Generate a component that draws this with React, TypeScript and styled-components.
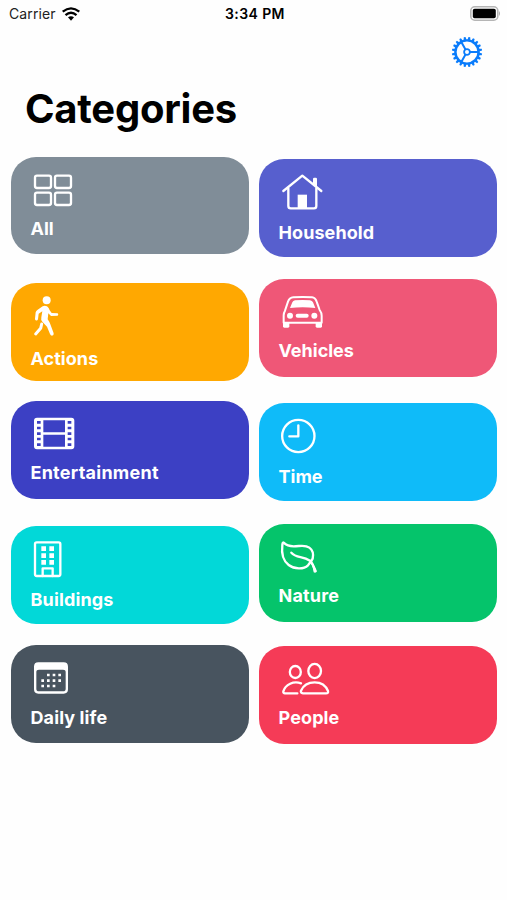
import React from "react";
import styled, { createGlobalStyle } from "styled-components";

const GlobalStyle = createGlobalStyle`
  body {
    margin: 0;
    background: #fefefe;
    font-family: Inter, "Liberation Sans", sans-serif;
  }
`;

const Screen = styled.div`
  box-sizing: border-box;
  width: 507px;
  height: 900px;
  overflow: hidden;
  color: #000;
`;

const StatusBar = styled.header`
  display: grid;
  grid-template-columns: 1fr auto 1fr;
  align-items: center;
  height: 27px;
  padding: 0 6px 0 9px;
`;

const Carrier = styled.div`
  display: flex;
  align-items: center;
  gap: 6px;
  font-size: 14px;
  letter-spacing: 0.12px;
  color: #222;
`;

const Clock = styled.div`
  font-size: 14px;
  font-weight: 600;
  letter-spacing: 0.4px;
`;

const BatterySlot = styled.div`
  display: flex;
  justify-content: flex-end;
`;

const NavBar = styled.nav`
  display: flex;
  justify-content: flex-end;
  height: 51px;
  padding: 8px 23px 0 0;
  box-sizing: border-box;
`;

const IconButton = styled.button`
  display: block;
  width: 34px;
  height: 34px;
  padding: 0;
  border: 0;
  background: none;
  color: #0a7cfb;
`;

const Title = styled.h1`
  margin: 0;
  height: 79px;
  padding: 7px 0 0 25px;
  box-sizing: border-box;
  font-size: 40px;
  line-height: 48px;
  font-weight: 700;
  letter-spacing: -0.25px;
`;

const Columns = styled.main`
  display: flex;
  gap: 10px;
  padding-left: 11px;
`;

const Column = styled.div`
  display: flex;
  flex-direction: column;
  width: 238px;
`;

const Card = styled.section<{ $color: string; $gap: number; $height: number }>`
  box-sizing: border-box;
  flex: none;
  height: ${(p) => p.$height}px;
  margin-top: ${(p) => p.$gap}px;
  padding: 12px 0 0 20px;
  border-radius: 25px;
  background: ${(p) => p.$color};
  color: #fff;
`;

const CardIcon = styled.svg`
  display: block;
  width: 60px;
  height: 46px;
  overflow: visible;
  fill: none;
  stroke: currentColor;
  stroke-width: 7;
  stroke-linecap: round;
  stroke-linejoin: round;
`;

const Label = styled.h2<{ $drop: number; $spacing: number }>`
  margin: ${(p) => p.$drop}px 0 0 -0.5px;
  font-size: 18px;
  line-height: 22px;
  font-weight: 700;
  letter-spacing: ${(p) => p.$spacing}px;
  white-space: nowrap;
`;

const AllIcon = () => (
  <CardIcon viewBox="93 72 180 138">
    <rect x="105" y="92" width="48" height="37" rx="6" />
    <rect x="165" y="92" width="48" height="37" rx="6" />
    <rect x="105" y="143" width="48" height="37" rx="6" />
    <rect x="165" y="143" width="48" height="37" rx="6" />
  </CardIcon>
);

const HouseIcon = () => (
  <CardIcon viewBox="75 79 180 138">
    <path d="M88 139 L145 93 L202 139" />
    <path d="M103 131 V184 Q103 191 110 191 H180 Q187 191 187 184 V131" />
    <path d="M177 103 Q177 99 181 99 H185 Q189 99 189 103 V129 L177 119 Z" fill="currentColor" stroke="none" />
    <path d="M131 150 H159 V190 H131 Z" fill="currentColor" stroke="none" />
  </CardIcon>
);

const WalkIcon = () => (
  <CardIcon viewBox="93 75 180 138">
    <circle cx="140" cy="91" r="12" fill="currentColor" stroke="none" />
    <path
      d="M128 109 Q134 106 141 109 Q147 113 149 121 L155 129 L173 130 Q177 133 173 137 L153 138 L145 130 L143 148 Q148 155 151 163 L161 190 Q162 197 156 197 Q152 197 150 192 L141 170 L127 155 Q122 150 124 142 L127 124 L116 131 L114 148 Q112 153 107 151 Q105 149 105 146 L107 127 Q108 123 113 119 Z"
      fill="currentColor"
      stroke="none"
    />
    <path d="M125 162 L122 175 L107 192" strokeWidth="9" />
  </CardIcon>
);

const CarIcon = () => (
  <CardIcon viewBox="75 64 180 138">
    <path
      d="M89 159 V137 Q89 130 93 123 L102 96 Q106 84 118 83 Q146 81 174 83 Q184 84 188 96 L197 121 Q203 129 203 138 V159 Z"
      strokeWidth="6"
    />
    <path
      d="M108 115 L115 98 Q117 93 123 92 Q146 90 168 92 Q175 93 177 98 L184 115 Q146 111 108 115 Z"
      fill="currentColor"
      stroke="none"
    />
    <circle cx="108" cy="138" r="9" fill="currentColor" stroke="none" />
    <circle cx="181" cy="138" r="9" fill="currentColor" stroke="none" />
    <rect x="125" y="132" width="39" height="12" rx="6" fill="currentColor" stroke="none" />
    <path d="M87 158 H106 V170 Q106 174 102 174 H91 Q87 174 87 170 Z" fill="currentColor" stroke="none" />
    <path d="M185 158 H204 V170 Q204 174 200 174 H189 Q185 174 185 170 Z" fill="currentColor" stroke="none" />
  </CardIcon>
);

const FilmIcon = () => (
  <CardIcon viewBox="93 71 180 138">
    <path
      fillRule="evenodd"
      fill="currentColor"
      stroke="none"
      d="M111 85 H214 Q223 85 223 94 V171 Q223 180 214 180 H111 Q102 180 102 171 V94 Q102 85 111 85 Z
      M130 93 V129 H195 V93 Z M130 136 V172 H195 V136 Z
      M111 95 h11 v8 h-11 z M111 112 h11 v8 h-11 z M111 129 h11 v8 h-11 z M111 145 h11 v8 h-11 z M111 162 h11 v8 h-11 z
      M203 95 h11 v8 h-11 z M203 112 h11 v8 h-11 z M203 129 h11 v8 h-11 z M203 145 h11 v8 h-11 z M203 162 h11 v8 h-11 z"
    />
  </CardIcon>
);

const TimeIcon = () => (
  <CardIcon viewBox="75 75 180 138">
    <circle cx="133" cy="138" r="48.5" />
    <path d="M133 106 V139 H106" />
  </CardIcon>
);

const BuildingIcon = () => (
  <CardIcon viewBox="93 69 180 138">
    <rect x="105" y="82" width="76" height="101" rx="5" />
    <path d="M128 183 V160 H158 V183" />
    <path
      d="M124 94h14v14h-14z M148 94h14v14h-14z M124 115h14v14h-14z M148 115h14v14h-14z M124 135h14v14h-14z M148 135h14v14h-14z"
      fill="currentColor"
      stroke="none"
    />
  </CardIcon>
);

const LeafIcon = () => (
  <CardIcon viewBox="75 63 180 138">
    <path d="M89 83 Q100 94 119 94 C138 94 153 88 166 98 Q181 109 176 131 Q171 140 162 151 C149 164 121 163 104 150 C84 135 83 107 85 90 Q86 81 89 83 Z" />
    <path d="M112 113 C127 130 145 122 168 137 Q176 143 183 168" />
    <path d="M173 143 Q182 149 189 169 Q186 175 179 172 Q177 154 170 146 Z" fill="currentColor" stroke="none" />
  </CardIcon>
);

const CalendarIcon = () => (
  <CardIcon viewBox="93 68 180 138">
    <path
      fill="currentColor"
      fillRule="evenodd"
      stroke="none"
      d="M115 84 H191 Q204 84 204 97 V165 Q204 178 191 178 H115 Q102 178 102 165 V97 Q102 84 115 84 Z M117 106 Q109 106 109 113 V163 Q109 171 117 171 H189 Q197 171 197 163 V113 Q197 106 189 106 Z"
    />
    <path
      d="M141 118h8v8h-8z M158 118h8v8h-8z M175 118h8v8h-8z M124 135h8v8h-8z M141 135h8v8h-8z M158 135h8v8h-8z M175 135h8v8h-8z M124 151h8v8h-8z M141 151h8v8h-8z M158 151h8v8h-8z"
      fill="currentColor"
      stroke="none"
    />
  </CardIcon>
);

const PeopleIcon = () => (
  <CardIcon viewBox="75 69 180 138">
    <ellipse cx="124" cy="111" rx="16.5" ry="18" />
    <ellipse cx="182" cy="108" rx="19" ry="21.5" />
    <path d="M141 145 C119 137 94 148 88 169 Q87 175 93 175 H130" />
    <path d="M147 175 H216 Q224 175 222 168 C216 153 202 142 182 142 C162 142 147 153 141 167 Q139 174 147 175 Z" />
  </CardIcon>
);

const WifiIcon = () => (
  <svg width="18" height="14" viewBox="186 17 54 42" fill="none" stroke="#000" strokeWidth="7">
    <path d="M188 31 Q213 11 238 31" />
    <path d="M196.5 41.5 Q213 27 229.5 41.5" />
    <path d="M204 48 Q213 41 222 48 L213 58 Z" fill="#000" stroke="none" />
  </svg>
);

const BatteryIcon = () => (
  <svg width="31" height="15" viewBox="0 0 31 15">
    <rect x="0.8" y="0.8" width="27" height="13.4" rx="4" fill="#fff" stroke="#b5b5b5" strokeWidth="1.6" />
    <rect x="2.8" y="2.8" width="23" height="9.4" rx="1.8" fill="#000" />
    <path d="M29 5 Q31 7.5 29 10 Z" fill="#aaa" />
  </svg>
);

const teeth = Array.from({ length: 20 }, (_, i) => i * 18 + 9);

const GearIcon = () => (
  <svg width="34" height="34" viewBox="-17 -17 34 34" fill="none" stroke="currentColor" strokeWidth="2">
    <circle r="11.6" strokeWidth="2.4" />
    <circle r="2.9" strokeWidth="1.8" />
    <path d="M3 0 H11 M-1.5 -2.6 L-5.7 -9.9 M-1.5 2.6 L-5.7 9.9" />
    {teeth.map((angle) => (
      <path key={angle} d="M-1.5 -12 L-0.9 -15.1 H0.9 L1.5 -12 Z" fill="currentColor" stroke="none" transform={`rotate(${angle})`} />
    ))}
  </svg>
);

interface Category {
  name: string;
  color: string;
  gap: number;
  height: number;
  drop: number;
  spacing: number;
  Icon: React.ComponentType;
}

const leftColumn: Category[] = [
  { name: "All", color: "#808d98", gap: 0, height: 97, drop: 3, spacing: 0, Icon: AllIcon },
  { name: "Actions", color: "#ffa801", gap: 29, height: 98, drop: 7, spacing: 0.05, Icon: WalkIcon },
  { name: "Entertainment", color: "#3c40c4", gap: 20, height: 98, drop: 3, spacing: 0.24, Icon: FilmIcon },
  { name: "Buildings", color: "#02d8d8", gap: 27, height: 98, drop: 5, spacing: 0.15, Icon: BuildingIcon },
  { name: "Daily life", color: "#48545f", gap: 21, height: 98, drop: 4, spacing: 0.1, Icon: CalendarIcon },
];

const rightColumn: Category[] = [
  { name: "Household", color: "#575fce", gap: 2, height: 98, drop: 5, spacing: 0.08, Icon: HouseIcon },
  { name: "Vehicles", color: "#ef5777", gap: 22, height: 98, drop: 3, spacing: 0, Icon: CarIcon },
  { name: "Time", color: "#0fbbf9", gap: 26, height: 98, drop: 5, spacing: 0, Icon: TimeIcon },
  { name: "Nature", color: "#05c46b", gap: 23, height: 98, drop: 3, spacing: 0.18, Icon: LeafIcon },
  { name: "People", color: "#f53b57", gap: 24, height: 98, drop: 3, spacing: 0.12, Icon: PeopleIcon },
];

const CategoryColumn = ({ items }: { items: Category[] }) => (
  <Column>
    {items.map(({ name, color, gap, height, drop, spacing, Icon }) => (
      <Card key={name} $color={color} $gap={gap} $height={height}>
        <Icon />
        <Label $drop={drop} $spacing={spacing}>{name}</Label>
      </Card>
    ))}
  </Column>
);

export default function App() {
  return (
    <Screen>
      <GlobalStyle />
      <StatusBar>
        <Carrier>
          Carrier
          <WifiIcon />
        </Carrier>
        <Clock>3:34 PM</Clock>
        <BatterySlot>
          <BatteryIcon />
        </BatterySlot>
      </StatusBar>
      <NavBar>
        <IconButton aria-label="Settings">
          <GearIcon />
        </IconButton>
      </NavBar>
      <Title>Categories</Title>
      <Columns>
        <CategoryColumn items={leftColumn} />
        <CategoryColumn items={rightColumn} />
      </Columns>
    </Screen>
  );
}
